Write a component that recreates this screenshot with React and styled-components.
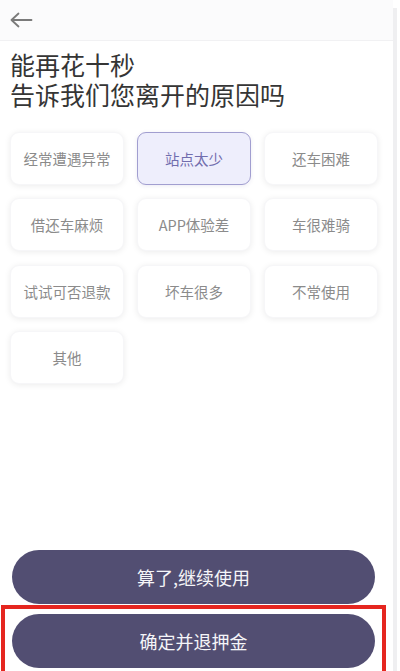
import React from "react";
import styled, { createGlobalStyle } from "styled-components";

const Global = createGlobalStyle`
  html, body { margin: 0; padding: 0; background: #fff; }
  body { font-family: "Noto Sans CJK SC", "Noto Sans", sans-serif; }
  * { box-sizing: border-box; }
`;

const Screen = styled.div`
  width: 400px;
  height: 671px;
  display: flex;
  overflow: hidden;
  background: #fff;
`;

const Main = styled.div`
  width: 393px;
  display: flex;
  flex-direction: column;
`;

const EdgeStrip = styled.div`
  width: 4px;
  margin-top: 8px;
  background: #efeff1;
`;

const Header = styled.div`
  height: 41px;
  display: flex;
  align-items: center;
  padding-left: 9px;
  background: #fbfbfc;
  border-bottom: 1px solid #f1f1f3;
`;

const BackButton = styled.button`
  border: none;
  background: none;
  padding: 0;
  display: flex;
  cursor: pointer;
`;

const Title = styled.h1`
  margin: 8px 0 0 10px;
  font-size: 25px;
  line-height: 30px;
  font-weight: 400;
  color: #353535;
`;

const Grid = styled.div`
  margin: 23px 0 0 10px;
  display: grid;
  grid-template-columns: repeat(3, 114px);
  grid-auto-rows: 53px;
  column-gap: 13px;
  row-gap: 13.33px;
`;

const Option = styled.button`
  border-radius: 9px;
  border: ${(p) => (p.$active ? "1.5px solid #a19ed0" : "1px solid #f6f6f8")};
  background: ${(p) => (p.$active ? "#eeeefc" : "#fff")};
  box-shadow: ${(p) =>
    p.$active ? "0 1px 4px rgba(90,80,160,0.12)" : "0 1px 6px rgba(0,0,0,0.08)"};
  color: ${(p) => (p.$active ? "#716dae" : "#8b8b8b")};
  font-family: inherit;
  font-size: 14.5px;
  display: flex;
  align-items: center;
  justify-content: center;
  padding: 0;
  cursor: pointer;
`;

const Spacer = styled.div`
  flex: 1;
`;

const Footer = styled.div`
  display: flex;
  flex-direction: column;
`;

const PillButton = styled.button`
  height: 54px;
  border: none;
  border-radius: 27px;
  background: #524e72;
  color: #f5f5f8;
  font-family: inherit;
  font-size: 18px;
  display: flex;
  align-items: center;
  justify-content: center;
  cursor: pointer;
`;

const FirstButton = styled(PillButton)`
  margin: 0 18px 1px 12px;
`;

const Highlight = styled.div`
  margin: 0 7px 0 1px;
  border: 4px solid #e5261f;
  border-bottom: none;
  padding: 5px 7px 3px 7px;
  display: flex;
  flex-direction: column;
`;

const reasons = [
  "经常遭遇异常",
  "站点太少",
  "还车困难",
  "借还车麻烦",
  "APP体验差",
  "车很难骑",
  "试试可否退款",
  "坏车很多",
  "不常使用",
  "其他",
];

export default function App() {
  return (
    <>
      <Global />
      <Screen>
        <Main>
          <Header>
            <BackButton aria-label="返回">
              <svg width="24" height="16" viewBox="0 0 24 16">
                <path
                  d="M22.5 8H2.5M9.5 1.5L2.5 8L9.5 14.5"
                  fill="none"
                  stroke="#7a7a7a"
                  strokeWidth="1.8"
                  strokeLinecap="round"
                  strokeLinejoin="round"
                />
              </svg>
            </BackButton>
          </Header>
          <Title>
            能再花十秒
            <br />
            告诉我们您离开的原因吗
          </Title>
          <Grid>
            {reasons.map((r) => (
              <Option key={r} $active={r === "站点太少"}>
                {r}
              </Option>
            ))}
          </Grid>
          <Spacer />
          <Footer>
            <FirstButton>算了,继续使用</FirstButton>
            <Highlight>
              <PillButton>确定并退押金</PillButton>
            </Highlight>
          </Footer>
        </Main>
        <EdgeStrip />
      </Screen>
    </>
  );
}
